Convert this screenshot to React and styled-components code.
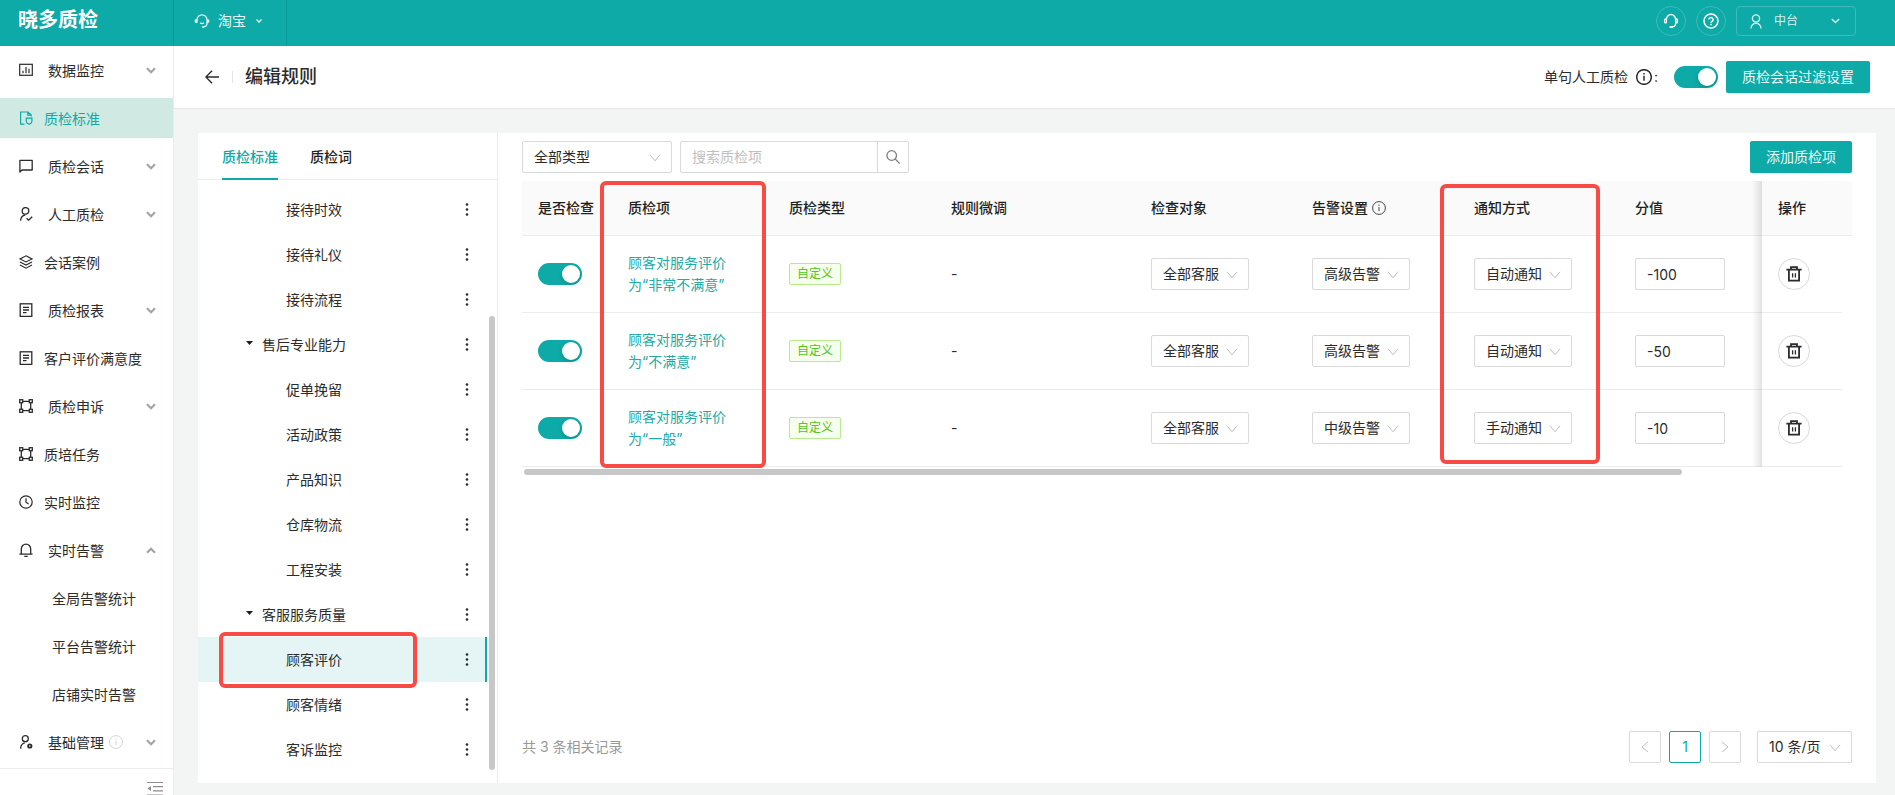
import React from "react";
import styled, { createGlobalStyle, css } from "styled-components";

const teal = "#0eaaa7";
const ink = "#2b2b2b";
const line = "#ececec";
const control = "#d9d9d9";

const GlobalStyle = createGlobalStyle`
  *, *::before, *::after { box-sizing: border-box; }
  body {
    margin: 0;
    background: #f3f5f5;
    color: ${ink};
    font-family: Inter, "Noto Sans CJK SC", sans-serif;
    font-size: 14px;
    line-height: 22px;
  }
  button, input, select { font: inherit; color: inherit; margin: 0; }
  button { padding: 0; border: 0; background: none; cursor: pointer; }
  a { color: inherit; text-decoration: none; }
  svg { display: block; flex: none; }
`;

/* ---------- icons ---------- */

const Svg = ({ size = 14, w, h, box, sw = 1.2, children, ...rest }) => (
  <svg
    width={w || size}
    height={h || size}
    viewBox={box || "0 0 14 14"}
    fill="none"
    stroke="currentColor"
    strokeWidth={sw}
    aria-hidden="true"
    {...rest}
  >
    {children}
  </svg>
);

const icons = {
  chart: (
    <Svg>
      <rect x="0.7" y="1.3" width="12.6" height="11" />
      <path d="M4 10.2V7.8M7 10.2V4M10 10.2V5.8" />
    </Svg>
  ),
  standard: (
    <Svg>
      <path d="M5.5 13.2H1.6V1H9l3.2 3v1.4M8.8 1v3.2h3.2" />
      <path d="M7.3 7.2h5.6v3.2c0 1.5-1.2 2.3-2.8 2.9-1.6-.6-2.8-1.4-2.8-2.9z" />
    </Svg>
  ),
  chat: (
    <Svg sw={1.3}>
      <path d="M.9 13V1.4h12.3v9.6H3z" strokeLinejoin="round" />
    </Svg>
  ),
  userCheck: (
    <Svg sw={1.3}>
      <circle cx="6.5" cy="3.9" r="3.3" />
      <path d="M1.6 13.8c.2-3.300 1.800-5.400 4.600-5.700" />
      <path d="M7.6 11.2l2 2 3.600-3.500" />
    </Svg>
  ),
  layers: (
    <Svg sw={1.1}>
      <path d="M7 .8l6 3.100-6 3.100-6-3.100z" />
      <path d="M1 7l6 3.100L13 7" />
      <path d="M1 10.100l6 3.100 6-3.100" />
    </Svg>
  ),
  report: (
    <Svg sw={1.3}>
      <rect x="1.2" y="0.8" width="11.6" height="12.6" />
      <path d="M4 4.300h6M4 7h6M4 9.700h3.500" />
    </Svg>
  ),
  frame: (
    <Svg sw={1.3}>
      <path d="M4 2.300h6M4 11.700h6M2.300 4v6M11.700 4v6" />
      <rect x="0.7" y="0.7" width="3" height="3" />
      <rect x="10.3" y="0.7" width="3" height="3" />
      <rect x="0.7" y="10.3" width="3" height="3" />
      <rect x="10.3" y="10.3" width="3" height="3" />
    </Svg>
  ),
  clock: (
    <Svg>
      <circle cx="7" cy="7" r="6.2" />
      <path d="M7 3.200V7.300l2.600 1.800" />
    </Svg>
  ),
  bell: (
    <Svg sw={1.3}>
      <path d="M2.300 11V6a4.700 4.900 0 0 1 9.400 0v5M.4 11.200h13.200M5.300 13.400h3.400" />
    </Svg>
  ),
  userGear: (
    <Svg sw={1.3}>
      <circle cx="6.3" cy="3.7" r="3" />
      <path d="M1.600 13.600c.2-3.400 1.700-5.400 4.300-5.800" />
      <circle cx="10.8" cy="11" r="1.7" strokeWidth="1.8" />
    </Svg>
  ),
};

const Chevron = ({ up }) => (
  <Svg w={10} h={7} box="0 0 10 7" sw={2.2}>
    <path d={up ? "M1 5.700L5 1.700 9 5.700" : "M1 1.300L5 5.300 9 1.300"} />
  </Svg>
);

const ThinDown = (props) => (
  <Svg w={12} h={8} box="0 0 12 8" sw={1} {...props}>
    <path d="M1 .8l5 6 5-6" />
  </Svg>
);

const InfoIcon = ({ size = 14, sw = 1 }) => (
  <Svg size={size} sw={sw}>
    <circle cx="7" cy="7" r="6.4" />
    <path d="M7 6v4.200M7 3.600v1.300" />
  </Svg>
);

const Headset = ({ size = 16 }) => (
  <Svg size={size} box="0 0 16 16" sw={1.3}>
    <path d="M3 9.800V7a5 5.200 0 0 1 10 0v3.200c0 2-1.300 3.500-3.600 3.700" />
    <path
      d="M2.600 6.400H2.300C1.300 6.400.9 7 .9 8s.4 1.900 1.400 1.900h.3zM13.400 6.400h.3c1 0 1.400.6 1.400 1.600s-.4 1.900-1.400 1.900h-.3z"
      fill="currentColor"
      strokeWidth=".6"
    />
    <path d="M6.200 9.800c1 1 2.600 1 3.600 0" />
    <circle cx="9" cy="14" r="1" fill="currentColor" stroke="none" />
  </Svg>
);

const Service = () => (
  <Svg size={16} box="0 0 16 16" sw={1.3}>
    <path d="M3.400 6.500a4.600 5 0 0 1 9.200 0v4c0 1.800-1.300 3.200-3.400 3.400" />
    <rect x="1.6" y="5.8" width="1.8" height="4" rx=".9" />
    <rect x="12.6" y="5.8" width="1.8" height="4" rx=".9" />
    <path d="M6.600 14h3.200" strokeWidth="2" />
  </Svg>
);

const Help = () => (
  <Svg size={16} box="0 0 16 16" sw={1.5}>
    <circle cx="8" cy="8" r="7" />
    <path d="M5.900 6.600a2.100 2 0 1 1 3.200 1.700c-.8.500-1.100.8-1.100 1.500M8 10.700v1.500" />
  </Svg>
);

const UserIcon = () => (
  <Svg w={12} h={15} box="0 0 12 15" sw={1.3}>
    <circle cx="6" cy="4.4" r="3.6" />
    <path d="M1 14.500c.2-3.200 2-5.200 5-5.200s4.800 2 5 5.200" />
  </Svg>
);

const Trash = () => (
  <Svg size={16} box="0 0 16 16" sw={1.8}>
    <path d="M.4 3.600h15.200M5 3.600V1.200h6v2.400M2.900 4.500v10.200h10.200V4.500" />
    <path d="M6.600 7.200v4.400M9.400 7.200v4.400" strokeWidth="1.3" />
  </Svg>
);

/* ---------- shell ---------- */

const Shell = styled.div`
  display: flex;
  flex-direction: column;
  height: 100vh;
  overflow: hidden;
`;

const TopBar = styled.header`
  flex: none;
  display: flex;
  height: 46px;
  padding-right: 39px;
  background: ${teal};
  color: #fff;
`;

const Brand = styled.div`
  width: 174px;
  padding: 6px 18px;
  border-right: 1px solid #0a9a98;
  font-size: 20px;
  font-weight: 700;
  line-height: 28px;
`;

const Platform = styled.button`
  display: flex;
  align-items: center;
  width: 113px;
  padding: 0 0 4px 20px;
  border-right: 1px solid #0a9a98;
  color: #e4f6f6;
  span { margin: 0 10px 0 8px; }
`;

const TopActions = styled.div`
  display: flex;
  gap: 10px;
  margin-left: auto;
  padding-top: 6px;
`;

const RoundTop = styled.button`
  display: grid;
  place-items: center;
  width: 30px;
  height: 30px;
  border: 1px solid #3ebbb9;
  border-radius: 50%;
`;

const Account = styled.button`
  display: flex;
  align-items: center;
  width: 120px;
  height: 30px;
  padding: 0 15px 0 13px;
  border: 1px solid #3ebbb9;
  border-radius: 4px;
  color: #d6f1f0;
  font-size: 12px;
  span { margin: 0 auto 0 12px; }
`;

const Body = styled.div`
  flex: 1;
  display: flex;
  min-height: 0;
`;

/* ---------- side menu ---------- */

const Side = styled.nav`
  flex: none;
  display: flex;
  flex-direction: column;
  width: 174px;
  background: #fff;
  border-right: 1px solid ${line};
`;

const Menu = styled.ul`
  flex: 1;
  min-height: 0;
  margin: 0;
  padding: 0;
  overflow: hidden;
  list-style: none;
`;

const menuRow = css`
  display: flex;
  align-items: center;
  width: 100%;
  height: 40px;
  margin: 4px 0 8px;
  padding: 0 17px 0 19px;
  text-align: left;
`;

const MenuText = styled.span`
  padding-top: 2px;
`;

const MenuGroup = styled.button`
  ${menuRow}
  gap: 5px;
  ${MenuText} { margin-left: 10px; }
  > svg:last-child { margin-left: auto; color: #a3a3a3; }
`;

const MenuLink = styled.a`
  ${menuRow}
  gap: 11px;
  padding-left: ${(p) => (p.$nested ? 52 : 19)}px;
  ${(p) => p.$active && `background: #d1e9e3; color: ${teal};`}
`;

const Faint = styled.i`
  color: #d4d4d4;
`;

const SideFoot = styled.div`
  flex: none;
  display: flex;
  justify-content: flex-end;
  height: 27px;
  padding: 12px 10px 0;
  border-top: 1px solid ${line};
  color: #8c8c8c;
  overflow: hidden;
  button { height: 16px; }
`;

/* ---------- page ---------- */

const Page = styled.main`
  flex: 1;
  display: flex;
  flex-direction: column;
  min-width: 0;
`;

const PageHead = styled.div`
  flex: none;
  display: flex;
  align-items: center;
  height: 63px;
  padding: 0 25px 0 31px;
  background: #fff;
  border-bottom: 1px solid #e8e8e8;
  h1 {
    margin: 0 auto 0 12px;
    font-size: 18px;
    font-weight: 500;
    line-height: 28px;
  }
`;

const Rule = styled.span`
  width: 1px;
  height: 12px;
  margin-left: 13px;
  background: #e4e4e4;
`;

const SwitchLabel = styled.label`
  display: flex;
  align-items: center;
  gap: 8px;
  margin-right: 16px;
  span { margin-left: -6px; }
`;

const Switch = styled.input.attrs({ type: "checkbox" })`
  appearance: none;
  display: block;
  flex: none;
  width: 44px;
  height: 22px;
  border-radius: 11px;
  background: #bfbfbf;
  cursor: pointer;
  &::before {
    content: "";
    display: block;
    width: 18px;
    height: 18px;
    margin: 2px;
    border-radius: 50%;
    background: #fff;
    box-shadow: 0 2px 4px rgba(0, 35, 11, 0.2);
  }
  &:checked { background: ${teal}; }
  &:checked::before { margin-left: 24px; }
`;

const Primary = styled.button`
  height: 32px;
  padding: 0 16px;
  border-radius: 2px;
  background: ${teal};
  color: #e9f8f8;
  box-shadow: 0 2px 0 rgba(0, 0, 0, 0.04);
`;

const HeadButton = styled(Primary)`
  margin-left: 8px;
`;

const Card = styled.div`
  flex: 1;
  display: flex;
  min-height: 0;
  margin: 24px 19px 12px 24px;
  background: #fff;
`;

const Marker = styled.span`
  position: absolute;
  z-index: 5;
  top: ${(p) => p.$top}px;
  left: ${(p) => p.$left}px;
  width: ${(p) => p.$w}px;
  height: ${(p) => p.$h}px;
  border: 4px solid #f84b46;
  border-radius: 6px;
  pointer-events: none;
`;

/* ---------- category tree ---------- */

const TreePanel = styled.section`
  flex: none;
  display: flex;
  flex-direction: column;
  width: 300px;
  border-right: 1px solid ${line};
`;

const Tabs = styled.div`
  flex: none;
  display: flex;
  gap: 32px;
  height: 47px;
  padding: 0 24px;
  border-bottom: 1px solid ${line};
`;

const Tab = styled.button`
  height: 47px;
  padding-top: 2px;
  border-bottom: 2px solid ${(p) => (p.$active ? teal : "transparent")};
  color: ${(p) => (p.$active ? teal : "#1f1f1f")};
  font-weight: 500;
`;

const TreeBody = styled.div`
  flex: 1;
  display: flex;
  min-height: 0;
  overflow: hidden;
`;

const Tree = styled.ul`
  flex: 1;
  margin: 0;
  padding: 7px 0 0;
  list-style: none;
`;

const TreeRow = styled.li`
  position: relative;
  display: flex;
  align-items: center;
  height: 45px;
  padding: 0 17px 0 ${(p) => (p.$group ? 48 : 88)}px;
  ${(p) =>
    p.$active &&
    css`
      background: #e5f5f5;
      box-shadow: inset -2px 0 0 ${teal};
    `}
`;

const TreeLabel = styled.button`
  flex: 1;
  display: flex;
  align-items: center;
  gap: 9px;
  text-align: left;
`;

const ScrollTrack = styled.div`
  display: flex;
  flex: none;
  width: 10px;
  padding: 136px 2px 13px;
`;

const Thumb = styled.span`
  flex: 1;
  border-radius: 3px;
  background: #c7c7c7;
`;

/* ---------- rules table ---------- */

const RulesPanel = styled.section`
  flex: 1;
  display: flex;
  flex-direction: column;
  min-width: 0;
  padding: 8px 24px 20px;
`;

const Toolbar = styled.div`
  flex: none;
  display: flex;
  gap: 8px;
  margin-bottom: 8px;
  ${Primary} { margin-left: auto; }
`;

const SelectBox = styled.span`
  position: relative;
  display: block;
  width: ${(p) => p.$w}px;
  select {
    appearance: none;
    display: block;
    width: 100%;
    height: 32px;
    padding: 0 11px;
    border: 1px solid ${control};
    border-radius: 2px;
    background: #fff;
  }
  svg {
    position: absolute;
    top: 13px;
    right: 11px;
    color: #bfbfbf;
    pointer-events: none;
  }
`;

const SearchBox = styled.form`
  display: flex;
  width: 229px;
  height: 32px;
  border: 1px solid ${control};
  border-radius: 2px;
  input {
    flex: 1;
    min-width: 0;
    padding: 0 11px;
    border: 0;
    background: none;
    outline: 0;
  }
  input::placeholder { color: #bfbfbf; }
  button {
    display: grid;
    place-items: center;
    width: 31px;
    border-left: 1px solid ${control};
    color: #7d7d7d;
  }
`;

const Table = styled.table`
  width: 100%;
  table-layout: fixed;
  border-collapse: separate;
  border-spacing: 0;
  th, td {
    padding: 0 16px;
    border-bottom: 1px solid ${line};
    text-align: left;
  }
  th {
    position: relative;
    height: 55px;
    background: #fafafa;
    font-weight: 500;
    color: #1f1f1f;
    white-space: nowrap;
  }
  td { height: 77px; }
  th.edge { padding: 0; }
  td.edge { padding: 0; border: 0; }
`;

const fixedShadow = css`
  position: relative;
  &::before {
    content: "";
    position: absolute;
    top: 0;
    right: 100%;
    bottom: -1px;
    width: 10px;
    background: linear-gradient(to right, transparent, rgba(0, 0, 0, 0.11));
  }
`;

const FixedHead = styled.th`${fixedShadow}`;
const FixedCell = styled.td`${fixedShadow}`;

const HeadWithIcon = styled.span`
  display: flex;
  align-items: center;
  gap: 4px;
  svg { color: #444; }
`;

const RuleLink = styled.a`
  display: block;
  color: #23aaa6;
`;

const Tag = styled.span`
  display: block;
  width: max-content;
  padding: 0 7px;
  border: 1px solid #b7eb8f;
  border-radius: 2px;
  background: #f6ffed;
  color: #52c41a;
  font-size: 12px;
  line-height: 20px;
`;

const Score = styled.input`
  display: block;
  width: 90px;
  height: 32px;
  padding: 0 11px;
  border: 1px solid ${control};
  border-radius: 2px;
`;

const RoundButton = styled.button`
  display: grid;
  place-items: center;
  width: 32px;
  height: 32px;
  border: 1px solid ${control};
  border-radius: 50%;
  color: #2b2b30;
`;

const HorizontalTrack = styled.div`
  display: flex;
  height: 10px;
  padding: 2px 170px 2px 2px;
`;

const Footer = styled.div`
  display: flex;
  align-items: center;
  gap: 8px;
  margin-top: auto;
  p {
    margin: 0 auto 0 0;
    color: #999;
  }
  ${SelectBox} { margin-left: 8px; }
`;

const PageButton = styled.button`
  display: grid;
  place-items: center;
  width: 32px;
  height: 32px;
  border: 1px solid ${(p) => (p.$current ? teal : control)};
  border-radius: 2px;
  color: ${(p) => (p.$current ? teal : "#bfbfbf")};
`;

/* ---------- data ---------- */

const menu = [
  { label: "数据监控", icon: "chart", group: true },
  { label: "质检标准", icon: "standard", active: true },
  { label: "质检会话", icon: "chat", group: true },
  { label: "人工质检", icon: "userCheck", group: true },
  { label: "会话案例", icon: "layers" },
  { label: "质检报表", icon: "report", group: true },
  { label: "客户评价满意度", icon: "report" },
  { label: "质检申诉", icon: "frame", group: true },
  { label: "质培任务", icon: "frame" },
  { label: "实时监控", icon: "clock" },
  { label: "实时告警", icon: "bell", group: true, open: true },
  { label: "全局告警统计", nested: true },
  { label: "平台告警统计", nested: true },
  { label: "店铺实时告警", nested: true },
  { label: "基础管理", icon: "userGear", group: true, info: true },
];

const tree = [
  { label: "接待时效" },
  { label: "接待礼仪" },
  { label: "接待流程" },
  { label: "售后专业能力", group: true },
  { label: "促单挽留" },
  { label: "活动政策" },
  { label: "产品知识" },
  { label: "仓库物流" },
  { label: "工程安装" },
  { label: "客服服务质量", group: true },
  { label: "顾客评价", active: true },
  { label: "顾客情绪" },
  { label: "客诉监控" },
];

const rules = [
  { name: ["顾客对服务评价", "为“非常不满意”"], alarm: "高级告警", notify: "自动通知", score: "-100" },
  { name: ["顾客对服务评价", "为“不满意”"], alarm: "高级告警", notify: "自动通知", score: "-50" },
  { name: ["顾客对服务评价", "为“一般”"], alarm: "中级告警", notify: "手动通知", score: "-10" },
];

const Select = ({ label, value, options = [value], width = 98 }) => (
  <SelectBox $w={width}>
    <select aria-label={label} defaultValue={value}>
      {options.map((o) => (
        <option key={o}>{o}</option>
      ))}
    </select>
    <ThinDown />
  </SelectBox>
);

const SideMenu = () => (
  <Side>
    <Menu>
      {menu.map((m) => (
        <li key={m.label}>
          {m.group ? (
            <MenuGroup aria-expanded={!!m.open}>
              {icons[m.icon]}
              <MenuText>{m.label}</MenuText>
              {m.info && (
                <Faint>
                  <InfoIcon />
                </Faint>
              )}
              <Chevron up={m.open} />
            </MenuGroup>
          ) : (
            <MenuLink href="#" $nested={m.nested} $active={m.active}>
              {m.icon && icons[m.icon]}
              <MenuText>{m.label}</MenuText>
            </MenuLink>
          )}
        </li>
      ))}
    </Menu>
    <SideFoot>
      <button aria-label="收起菜单">
        <Svg size={16} box="0 0 16 16" sw={1.2}>
          <path d="M0 1.500h16M6 5.700h10M6 9.900h10M0 14.100h16" />
          <path d="M4 5v5L.5 7.500z" fill="currentColor" stroke="none" />
        </Svg>
      </button>
    </SideFoot>
  </Side>
);

const CategoryTree = () => (
  <TreePanel>
    <Tabs role="tablist">
      <Tab role="tab" aria-selected="true" $active>质检标准</Tab>
      <Tab role="tab" aria-selected="false">质检词</Tab>
    </Tabs>
    <TreeBody>
      <Tree>
        {tree.map((t) => (
          <TreeRow key={t.label} $group={t.group} $active={t.active}>
            <TreeLabel>
              {t.group && (
                <svg width="7" height="8" viewBox="0 0 7 8" aria-hidden="true">
                  <path d="M0 0h7L3.500 4z" fill="#1f1f1f" />
                </svg>
              )}
              {t.label}
            </TreeLabel>
            <button aria-label={`${t.label} 更多`}>
              <svg width="6" height="14" viewBox="0 0 6 14" fill="#2b2b2b">
                <circle cx="3" cy="1.5" r="1.3" />
                <circle cx="3" cy="6.5" r="1.3" />
                <circle cx="3" cy="11.5" r="1.3" />
              </svg>
            </button>
            {t.active && <Marker $top={-5} $left={21} $w={198} $h={56} />}
          </TreeRow>
        ))}
      </Tree>
      <ScrollTrack>
        <Thumb />
      </ScrollTrack>
    </TreeBody>
  </TreePanel>
);

const RulesTable = () => (
  <Table>
    <colgroup>
      <col width="90" />
      <col width="161" />
      <col width="162" />
      <col width="200" />
      <col width="161" />
      <col width="162" />
      <col width="161" />
      <col />
      <col width="80" />
      <col width="10" />
    </colgroup>
    <thead>
      <tr>
        <th>是否检查</th>
        <th>
          质检项
          <Marker $top={0} $left={-12} $w={166} $h={287} />
        </th>
        <th>质检类型</th>
        <th>规则微调</th>
        <th>检查对象</th>
        <th>
          <HeadWithIcon>
            告警设置
            <InfoIcon />
          </HeadWithIcon>
        </th>
        <th>
          通知方式
          <Marker $top={3} $left={-18} $w={160} $h={280} />
        </th>
        <th>分值</th>
        <FixedHead>操作</FixedHead>
        <th className="edge" />
      </tr>
    </thead>
    <tbody>
      {rules.map((r) => (
        <tr key={r.score}>
          <td>
            <Switch defaultChecked aria-label="是否检查" />
          </td>
          <td>
            <RuleLink href="#">
              {r.name[0]}
              <br />
              {r.name[1]}
            </RuleLink>
          </td>
          <td>
            <Tag>自定义</Tag>
          </td>
          <td>-</td>
          <td>
            <Select label="检查对象" value="全部客服" />
          </td>
          <td>
            <Select label="告警设置" value={r.alarm} options={["高级告警", "中级告警"]} />
          </td>
          <td>
            <Select label="通知方式" value={r.notify} options={["自动通知", "手动通知"]} />
          </td>
          <td>
            <Score type="text" aria-label="分值" defaultValue={r.score} />
          </td>
          <FixedCell>
            <RoundButton aria-label="删除">
              <Trash />
            </RoundButton>
          </FixedCell>
          <td className="edge" />
        </tr>
      ))}
    </tbody>
  </Table>
);

export default function App() {
  return (
    <>
      <GlobalStyle />
      <Shell>
        <TopBar>
          <Brand>晓多质检</Brand>
          <Platform>
            <Headset />
            <span>淘宝</span>
            <Svg w={6} h={4} box="0 0 6 4" sw={1.4}>
              <path d="M.5.6L3 3.100 5.500.6" />
            </Svg>
          </Platform>
          <TopActions>
            <RoundTop aria-label="客服">
              <Service />
            </RoundTop>
            <RoundTop aria-label="帮助">
              <Help />
            </RoundTop>
            <Account>
              <UserIcon />
              <span>中台</span>
              <Svg w={9} h={6} box="0 0 9 6" sw={1.4}>
                <path d="M.8 1L4.500 4.600 8.200 1" />
              </Svg>
            </Account>
          </TopActions>
        </TopBar>
        <Body>
          <SideMenu />
          <Page>
            <PageHead>
              <button aria-label="返回">
                <Svg sw={1.4}>
                  <path d="M7 .8L.9 7 7 13.200M.9 7H14" />
                </Svg>
              </button>
              <Rule />
              <h1>编辑规则</h1>
              <SwitchLabel htmlFor="sentence-check">
                单句人工质检
                <InfoIcon size={16} sw={1.3} />
                <span>:</span>
              </SwitchLabel>
              <Switch id="sentence-check" defaultChecked />
              <HeadButton>质检会话过滤设置</HeadButton>
            </PageHead>
            <Card>
              <CategoryTree />
              <RulesPanel>
                <Toolbar>
                  <Select label="质检类型" value="全部类型" width={150} />
                  <SearchBox onSubmit={(e) => e.preventDefault()}>
                    <input type="text" aria-label="搜索质检项" placeholder="搜索质检项" />
                    <button aria-label="搜索">
                      <Svg sw={1.3}>
                        <circle cx="5.7" cy="5.5" r="4.8" />
                        <path d="M9.200 9l4.500 4.500" />
                      </Svg>
                    </button>
                  </SearchBox>
                  <Primary>添加质检项</Primary>
                </Toolbar>
                <RulesTable />
                <HorizontalTrack>
                  <Thumb />
                </HorizontalTrack>
                <Footer>
                  <p>共 3 条相关记录</p>
                  <PageButton aria-label="上一页">
                    <Svg w={8} h={12} box="0 0 8 12" sw={1}>
                      <path d="M7 1L1 6l6 5" />
                    </Svg>
                  </PageButton>
                  <PageButton $current>1</PageButton>
                  <PageButton aria-label="下一页">
                    <Svg w={8} h={12} box="0 0 8 12" sw={1}>
                      <path d="M1 1l6 5-6 5" />
                    </Svg>
                  </PageButton>
                  <Select label="每页条数" value="10 条/页" width={95} />
                </Footer>
              </RulesPanel>
            </Card>
          </Page>
        </Body>
      </Shell>
    </>
  );
}
